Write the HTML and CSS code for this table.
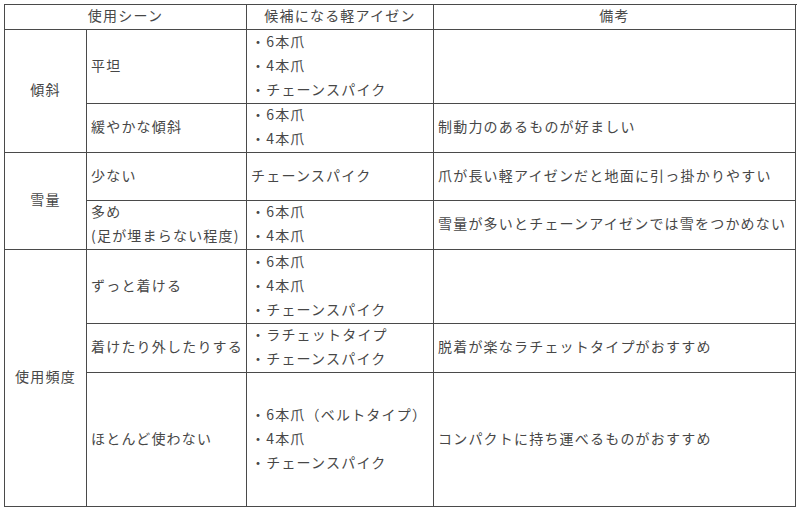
FILE: index.html
```html
<!DOCTYPE html>
<html lang="ja">
<head>
<meta charset="utf-8">
<title>軽アイゼン 使用シーン</title>
<link rel="stylesheet" href="styles.css">
</head>
<body>
<div class="sheet">
  <div class="grid">
    <div class="cell head span2">使用シーン</div>
    <div class="cell head">候補になる軽アイゼン</div>
    <div class="cell head">備考</div>

    <div class="cell cat r-keisha">傾斜</div>
    <div class="cell">平坦</div>
    <div class="cell"><span>・6本爪</span><span>・4本爪</span><span>・チェーンスパイク</span></div>
    <div class="cell"></div>

    <div class="cell">緩やかな傾斜</div>
    <div class="cell"><span>・6本爪</span><span>・4本爪</span></div>
    <div class="cell">制動力のあるものが好ましい</div>

    <div class="cell cat r-setsu">雪量</div>
    <div class="cell">少ない</div>
    <div class="cell">チェーンスパイク</div>
    <div class="cell">爪が長い軽アイゼンだと地面に引っ掛かりやすい</div>

    <div class="cell"><span>多め</span><span>(足が埋まらない程度)</span></div>
    <div class="cell"><span>・6本爪</span><span>・4本爪</span></div>
    <div class="cell">雪量が多いとチェーンアイゼンでは雪をつかめない</div>

    <div class="cell cat r-hindo">使用頻度</div>
    <div class="cell">ずっと着ける</div>
    <div class="cell"><span>・6本爪</span><span>・4本爪</span><span>・チェーンスパイク</span></div>
    <div class="cell"></div>

    <div class="cell">着けたり外したりする</div>
    <div class="cell"><span>・ラチェットタイプ</span><span>・チェーンスパイク</span></div>
    <div class="cell">脱着が楽なラチェットタイプがおすすめ</div>

    <div class="cell">ほとんど使わない</div>
    <div class="cell"><span>・6本爪（ベルトタイプ）</span><span>・4本爪</span><span>・チェーンスパイク</span></div>
    <div class="cell">コンパクトに持ち運べるものがおすすめ</div>
  </div>
</div>
</body>
</html>
```

FILE: styles.css
```css
html, body {
  margin: 0;
  padding: 0;
  background: #ffffff;
}

.sheet {
  width: 800px;
  height: 512px;
  padding: 4px 0 0 4px;
  box-sizing: border-box;
  background: #ffffff;
  font-family: "Noto Sans CJK JP", "Noto Sans", sans-serif;
  font-size: 14px;
  letter-spacing: 1.2px;
  color: #474747;
}

.grid {
  display: grid;
  width: 792px;
  grid-template-columns: 82px 160px 187px 362px;
  grid-template-rows: 25px 74px 49px 48px 49px 74px 49px 134px;
  border-top: 1px solid #4a4a4a;
  border-left: 1px solid #4a4a4a;
}

.cell {
  box-sizing: border-box;
  border-right: 1px solid #4a4a4a;
  border-bottom: 1px solid #4a4a4a;
  display: flex;
  flex-direction: column;
  justify-content: center;
  padding: 0 0 4px 4px;
  line-height: 24px;
  white-space: nowrap;
  overflow: hidden;
}

.head {
  align-items: center;
  padding-left: 0;
}

.span2 {
  grid-column: span 2;
}

.cat {
  align-items: center;
  padding-left: 0;
}

.r-keisha { grid-row: span 2; }
.r-setsu { grid-row: span 2; }
.r-hindo { grid-row: span 3; }
```
